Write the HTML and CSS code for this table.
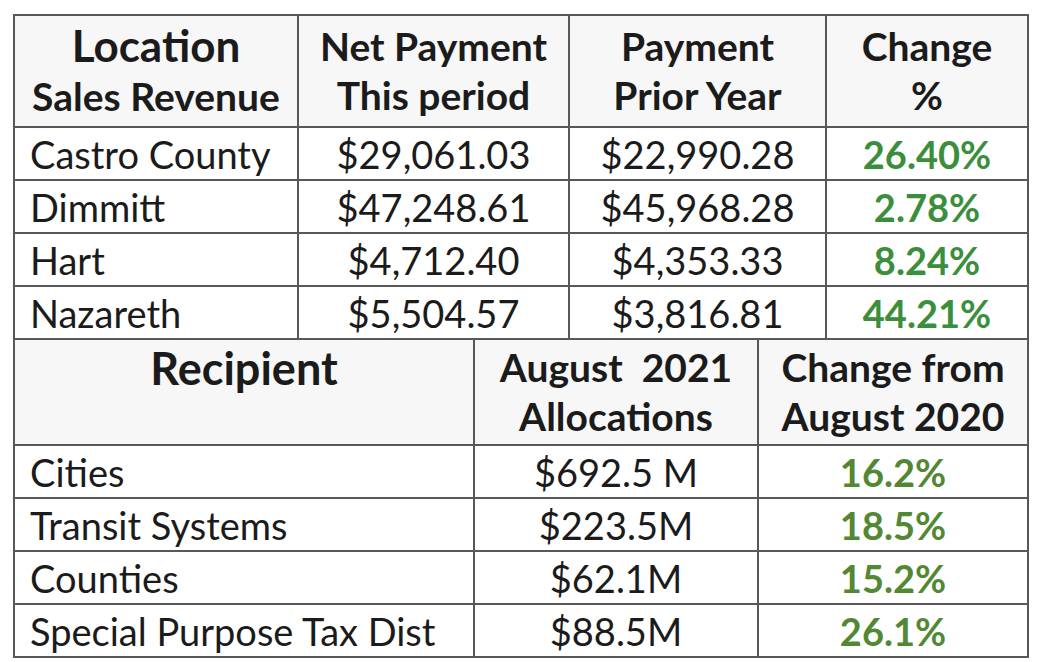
FILE: index.html
```html
<!DOCTYPE html>
<html>
<head>
<meta charset="utf-8">
<link rel="stylesheet" href="styles.css">
</head>
<body>
<div class="wrap">
  <table class="grid t1">
    <colgroup>
      <col class="c-loc"><col class="c-net"><col class="c-prior"><col class="c-chg">
    </colgroup>
    <thead>
      <tr class="head1">
        <th><span class="big">Location</span><br>Sales Revenue</th>
        <th>Net Payment<br>This period</th>
        <th>Payment<br>Prior Year</th>
        <th>Change<br>%</th>
      </tr>
    </thead>
    <tbody>
      <tr><td class="name">Castro County</td><td class="num">$29,061.03</td><td class="num">$22,990.28</td><td class="pct">26.40%</td></tr>
      <tr><td class="name">Dimmitt</td><td class="num">$47,248.61</td><td class="num">$45,968.28</td><td class="pct">2.78%</td></tr>
      <tr><td class="name">Hart</td><td class="num">$4,712.40</td><td class="num">$4,353.33</td><td class="pct">8.24%</td></tr>
      <tr><td class="name">Nazareth</td><td class="num">$5,504.57</td><td class="num">$3,816.81</td><td class="pct">44.21%</td></tr>
    </tbody>
  </table>
  <table class="grid t2">
    <colgroup>
      <col class="c-rec"><col class="c-alloc"><col class="c-from">
    </colgroup>
    <thead>
      <tr class="head2">
        <th class="top"><span class="big">Recipient</span></th>
        <th>August&nbsp; 2021<br>Allocations</th>
        <th>Change from<br>August 2020</th>
      </tr>
    </thead>
    <tbody>
      <tr><td class="name">Cities</td><td class="num">$692.5 M</td><td class="pct2">16.2%</td></tr>
      <tr><td class="name">Transit Systems</td><td class="num">$223.5M</td><td class="pct2">18.5%</td></tr>
      <tr><td class="name">Counties</td><td class="num">$62.1M</td><td class="pct2">15.2%</td></tr>
      <tr><td class="name">Special Purpose Tax Dist</td><td class="num">$88.5M</td><td class="pct2">26.1%</td></tr>
    </tbody>
  </table>
</div>
</body>
</html>
```
FILE: styles.css
```css
html, body {
  margin: 0;
  padding: 0;
  background: #ffffff;
}
.wrap {
  padding: 14px 0 0 13px;
  font-family: Lato, "Noto Sans", sans-serif;
  color: #1b1b1b;
}
.grid {
  border-collapse: collapse;
  table-layout: fixed;
  width: 1014px;
}
.grid th, .grid td {
  border: 2px solid #585858;
  padding: 0;
  white-space: nowrap;
  overflow: hidden;
}
.c-loc { width: 284px; }
.c-net { width: 271px; }
.c-prior { width: 257px; }
.c-chg { width: 202px; }
.c-rec { width: 460px; }
.c-alloc { width: 284px; }
.c-from { width: 270px; }

.grid th {
  background: #f7f7f7;
  font-weight: 700;
  font-size: 39px;
  line-height: 49px;
  text-align: center;
  vertical-align: middle;
}
.grid th .big {
  font-size: 44px;
}
.head1 { height: 112px; }
.head2 { height: 105px; }
.t2 thead th { border-top: none; }
.grid th.top {
  vertical-align: top;
  padding-top: 4px;
}
.grid th.top .big {
  font-size: 45px;
}
.grid td {
  height: 51px;
  font-size: 38px;
  line-height: 44px;
  vertical-align: middle;
}
.grid td.name {
  text-align: left;
  padding-left: 15px;
}
.grid td.num {
  text-align: center;
}
.grid td.pct {
  text-align: center;
  font-weight: 700;
  color: #3b8e3b;
}
.grid td.pct2 {
  text-align: center;
  font-weight: 700;
  color: #528833;
}
```
